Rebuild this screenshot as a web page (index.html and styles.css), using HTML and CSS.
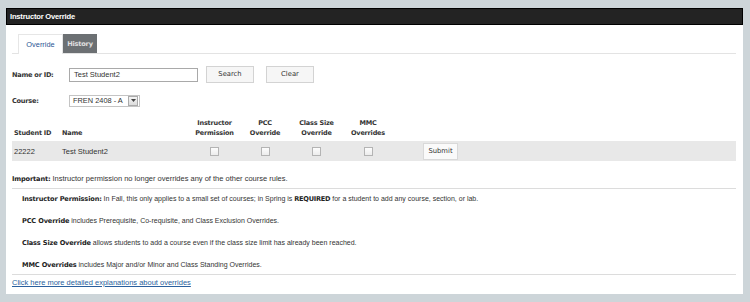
FILE: index.html
```html
<!DOCTYPE html>
<html>
<head>
<meta charset="utf-8">
<link rel="stylesheet" href="styles.css">
</head>
<body>
<div class="panel">
  <div class="titlebar">Instructor Override</div>
  <div class="content">
    <div class="tabs">
      <div class="tab active">Override</div>
      <div class="tab dark">History</div>
    </div>
    <div class="formrow name-row">
      <label class="lbl">Name or ID:</label>
      <div class="input">Test Student2</div>
      <div class="btn search">Search</div>
      <div class="btn clear">Clear</div>
    </div>
    <div class="formrow course-row">
      <label class="lbl">Course:</label>
      <div class="select"><span>FREN 2408 - A</span><span class="arrow"><svg width="5" height="3" viewBox="0 0 5 3"><path d="M0 0h5L2.5 3z" fill="#444"/></svg></span></div>
    </div>
    <table class="grid">
      <colgroup>
        <col style="width:48px"><col style="width:130px"><col style="width:49px"><col style="width:52px"><col style="width:51px"><col style="width:52px"><col>
      </colgroup>
      <thead>
        <tr>
          <th class="left">Student ID</th>
          <th class="left">Name</th>
          <th>Instructor<br>Permission</th>
          <th>PCC<br>Override</th>
          <th>Class Size<br>Override</th>
          <th>MMC<br>Overrides</th>
          <th></th>
        </tr>
      </thead>
      <tbody>
        <tr class="datarow">
          <td class="left">22222</td>
          <td class="left">Test Student2</td>
          <td><span class="cb"></span></td>
          <td><span class="cb"></span></td>
          <td><span class="cb"></span></td>
          <td><span class="cb"></span></td>
          <td class="subcell"><span class="btn submit">Submit</span></td>
        </tr>
      </tbody>
    </table>
    <p class="important"><b>Important:</b> Instructor permission no longer overrides any of the other course rules.</p>
    <div class="notes">
      <p><b>Instructor Permission:</b> In Fall, this only applies to a small set of courses; in Spring is <b class="req">REQUIRED</b> for a student to add any course, section, or lab.</p>
      <p><b>PCC Override</b> includes Prerequisite, Co-requisite, and Class Exclusion Overrides.</p>
      <p><b>Class Size Override</b> allows students to add a course even if the class size limit has already been reached.</p>
      <p><b>MMC Overrides</b> includes Major and/or Minor and Class Standing Overrides.</p>
    </div>
    <a class="more" href="#">Click here more detailed explanations about overrides</a>
  </div>
</div>
</body>
</html>
```
FILE: styles.css
```css
html, body {
  margin: 0;
  padding: 0;
  background: #cdd5d9;
  width: 750px;
  height: 302px;
  overflow: hidden;
  font-family: "Liberation Sans", Arial, sans-serif;
  font-size: 7.5px;
  color: #333;
}
.panel {
  margin: 8px 7px 0 6px;
  background: #fff;
  height: 286px;
  display: flex;
  flex-direction: column;
}
.titlebar {
  background: #232323;
  border: 1px solid #000;
  color: #fff;
  font-family: "Liberation Sans", Arial, sans-serif;
  font-weight: bold;
  font-size: 7.6px;
  letter-spacing: -0.2px;
  height: 15px;
  line-height: 15px;
  padding-left: 3px;
}
.content {
  padding: 8px 6px 0 6px;
}
.tabs {
  display: flex;
  padding-left: 6px;
  border-bottom: 1px solid #e3e3e3;
  margin-right: 1px;
  height: 19px;
  margin-top: 1px;
}
.tab {
  height: 19px;
  line-height: 20px;
  font-size: 7.4px;
  text-align: center;
}
.tab.active {
  width: 43px;
  background: #fff;
  border: 1px solid #e6e6e6;
  border-bottom: none;
  color: #2a5594;
  height: 19px;
}
.tab.dark {
  width: 34px;
  background: #6c7073;
  color: #e0e0e0;
  font-family: "DejaVu Sans", Verdana, sans-serif;
  font-size: 6.6px;
  font-weight: bold;
  letter-spacing: -0.2px;
}
.formrow {
  display: flex;
  align-items: center;
}
.name-row {
  margin-top: 12px;
  height: 17px;
}
.lbl {
  width: 57px;
  font-family: "DejaVu Sans", Verdana, sans-serif;
  font-weight: bold;
  font-size: 6.6px;
  letter-spacing: -0.25px;
  color: #333;
}
.input {
  width: 123px;
  height: 12px;
  border: 1px solid #a9a9a9;
  line-height: 12px;
  padding-left: 4px;
  color: #333;
}
.btn {
  display: inline-block;
  background: #f6f6f6;
  border: 1px solid #d3d3d3;
  text-align: center;
  font-family: "DejaVu Sans", Verdana, sans-serif;
  font-size: 6.8px;
  color: #333;
}
.search {
  margin-left: 8px;
  width: 46px;
  height: 15px;
  line-height: 15px;
}
.clear {
  margin-left: 12px;
  width: 46px;
  height: 15px;
  line-height: 15px;
}
.course-row {
  margin-top: 11px;
  height: 13px;
}
.select {
  display: flex;
  align-items: center;
  justify-content: space-between;
  width: 66px;
  height: 10px;
  border: 1px solid #c4c4c4;
  padding-left: 3px;
  font-size: 7.4px;
}
.arrow {
  width: 8px;
  height: 8px;
  margin-right: 1px;
  border: 1px solid #aaa;
  background: linear-gradient(#f4f4f4, #dcdcdc);
  display: flex;
  align-items: center;
  justify-content: center;
}
.grid {
  margin-top: 11px;
  width: 724px;
  border-collapse: collapse;
  table-layout: fixed;
}
.grid th {
  font-family: "DejaVu Sans", Verdana, sans-serif;
  font-weight: bold;
  font-size: 6.5px;
  letter-spacing: -0.2px;
  line-height: 10px;
  text-align: center;
  vertical-align: bottom;
  padding: 0 0 3px 0;
  color: #333;
}
.grid th.left, .grid td.left {
  text-align: left;
  padding-left: 2px;
}
.datarow td {
  background: #e8e8e8;
  height: 20px;
  padding: 0;
  text-align: center;
  vertical-align: middle;
}
.cb {
  display: inline-block;
  width: 7px;
  height: 7px;
  border: 1px solid #b4b4b4;
  background: linear-gradient(#fdfdfd, #ececec);
  vertical-align: middle;
}
.subcell {
  text-align: left !important;
  padding-left: 29px !important;
}
.submit {
  width: 33px;
  height: 15px;
  line-height: 15px;
  background: #fafafa;
  border-color: #d9d9d9;
}
.important {
  margin: 13px 1px 0 0;
  padding-bottom: 4px;
  border-bottom: 1px solid #dcdcdc;
  line-height: 10px;
}
.important b, .notes b {
  font-family: "DejaVu Sans", Verdana, sans-serif;
  font-size: 6.6px;
  letter-spacing: -0.15px;
  color: #222;
}
.notes {
  padding-left: 10px;
  border-bottom: 1px solid #dcdcdc;
  margin-right: 1px;
  padding-bottom: 4px;
  font-size: 7px;
}
.notes p {
  margin: 5px 0 0 0;
  height: 17px;
  line-height: 10px;
}
.notes p:last-child {
  height: 10px;
}
.notes b.req {
  letter-spacing: -0.25px;
}
.more {
  display: block;
  margin-top: 3px;
  color: #2a5f9e;
  text-decoration: underline;
  line-height: 10px;
}
```
